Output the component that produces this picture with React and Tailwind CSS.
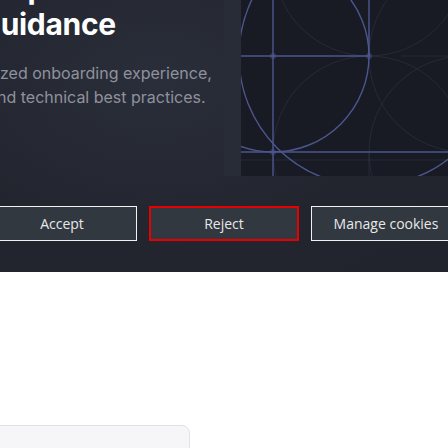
import React from 'react';

const PatternPanel = () => (
  <svg className="block h-full w-full" viewBox="0 0 207 176" fill="none">
    <rect width="207" height="176" fill="#181b23" />
    {/* faint guide circles */}
    <g stroke="#3a3f55" strokeWidth="0.6" opacity="0.7">
      <circle cx="224" cy="56" r="96" />
      <circle cx="128" cy="152" r="96" />
      <circle cx="224" cy="152" r="96" />
      <circle cx="128" cy="-40" r="96" />
      <line x1="128" y1="152" x2="128" y2="176" />
      <line x1="160" y1="56" x2="207" y2="56" />
      <line x1="0" y1="160" x2="207" y2="160" />
    </g>
    {/* bright lines */}
    <g stroke="#4d5690" strokeWidth="1.4">
      <circle cx="32" cy="56" r="96" />
      <circle cx="128" cy="56" r="130" />
      <line x1="32" y1="0" x2="32" y2="176" />
      <line x1="128" y1="0" x2="128" y2="56" />
      <line x1="0" y1="56" x2="128" y2="56" />
      <line x1="0" y1="152" x2="207" y2="152" />
    </g>
    <circle cx="32" cy="56" r="3" fill="#4d5690" opacity="0.5" />
    <circle cx="128" cy="56" r="3" fill="#4d5690" opacity="0.5" />
    <circle cx="32" cy="152" r="3" fill="#4d5690" opacity="0.5" />
  </svg>
);

const CookieButton = ({ label, danger }) => (
  <button
    className={`h-[35px] w-[150px] shrink-0 bg-[#323840] text-[14px] text-[#e8e8e8] ${
      danger ? 'border-2 border-[#e60000]' : 'border border-[#f2f2f2]'
    }`}
    style={{ fontFamily: '"Open Sans", "Noto Sans", sans-serif' }}
  >
    {label}
  </button>
);

export default function App() {
  return (
    <div className="h-[448px] w-[448px] overflow-hidden bg-white">
      <section className="h-[272px] overflow-hidden bg-[radial-gradient(ellipse_at_35%_30%,#2a2e3a_0%,#22252e_60%,#21242d_100%)]">
        <div className="flex h-[176px]">
          <div
            className="w-[224px] shrink-0 overflow-hidden"
            style={{ fontFamily: 'Inter, "Open Sans", sans-serif' }}
          >
            <h1 className="-ml-[18px] -mt-[30px] whitespace-nowrap text-[30px] font-bold leading-[36px] tracking-[-0.3px] text-white">
              <span className="block pl-[20px]">d product</span>
              <span className="block">guidance</span>
            </h1>
            <div className="mt-[19px] whitespace-nowrap text-[16px] leading-[24px] text-[#8f929d]">
              <p>zed onboarding experience,</p>
              <p className="-ml-[3px]">nd technical best practices.</p>
            </div>
          </div>
          <div className="w-[17px] shrink-0 bg-[#282c37]" />
          <div className="flex-1">
            <PatternPanel />
          </div>
        </div>
        <div className="-ml-[13px] mt-[30px] flex gap-3">
          <CookieButton label="Accept" />
          <CookieButton label="Reject" danger />
          <CookieButton label="Manage cookies" />
        </div>
      </section>
      <div className="mt-[153px] -ml-2 h-[40px] w-[198px] rounded-tr-[8px] border border-[#e1e1e4] bg-[#f6f6f8]" />
    </div>
  );
}
